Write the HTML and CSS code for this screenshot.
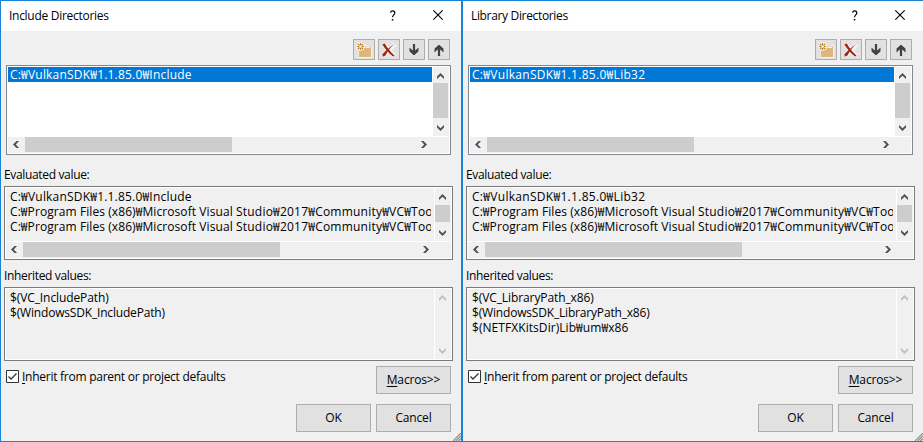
FILE: index.html
```
<!DOCTYPE html>
<html lang="en">
<head>
<meta charset="utf-8">
<title>Directories</title>
<link rel="stylesheet" href="styles.css">
</head>
<body>
<svg class="defs" width="0" height="0">
  <defs>
    <symbol id="chev-up" viewBox="0 0 7 6"><path d="M0 3.5 3.5 0 7 3.5V6L3.5 2.8 0 6z"/></symbol>
    <symbol id="chev-down" viewBox="0 0 7 6"><path d="M0 2.5 3.5 6 7 2.5V0L3.5 3.2 0 0z"/></symbol>
    <symbol id="chev-left" viewBox="0 0 6 7"><path d="M3.5 0 0 3.5 3.5 7H6L2.8 3.5 6 0z"/></symbol>
    <symbol id="chev-right" viewBox="0 0 6 7"><path d="M2.5 0 6 3.5 2.5 7H0L3.2 3.5 0 0z"/></symbol>
    <symbol id="help" viewBox="0 0 8 11"><path d="M1.5 2.6C1.8 1.3 2.700 .8 3.700 .8 5 .8 5.800 1.600 5.800 2.900 5.800 4.800 3.500 4.900 3.500 7.200" fill="none" stroke="#000" stroke-width="1.200"/><path d="M2.800 9h1.500v1.500H2.800z"/></symbol>
    <symbol id="close" viewBox="0 0 10 10"><path d="M.3.3 9.700 9.700M9.700.3.3 9.700" fill="none" stroke="#000" stroke-width="1.100"/></symbol>
    <symbol id="new" viewBox="0 0 16 16">
      <path d="M2.500 5H9l1-1.500h6V16H2.500z" fill="#f3f3f3"/>
      <path d="M3 6h6l1-1.500h5V15H3z" fill="#dcb67a"/><path d="M10 5.500H14" stroke="#f3f3f3"/>
      <circle cx="4.500" cy="4.500" r="4.300" fill="#f3f3f3"/>
      <path d="M4.500 1v2.200M4.500 5.800V8M1 4.500h2.200M5.800 4.500H8M2 2l1.500 1.500M5.500 5.500 7 7M7 2 5.500 3.500M3.500 5.500 2 7" stroke="#c27d1a" stroke-width="1.100"/>
    </symbol>
    <symbol id="delete" viewBox="0 0 16 16">
      <path d="M2.500 2.500 13 14M14 2 3 13.500" stroke="#f3f3f3" stroke-width="4.500"/>
      <path d="M1.300 2.500 3.800 1.500C6 5.500 10 10.500 13.500 13.500L12 14.500C8 11.500 4 7 1.300 2.500z" fill="#a1260d"/>
      <path d="M14 1.500C10 4.500 6.500 9 4.500 13.500L2 14.500 1.300 12.500C5 8.500 9 4.500 14 1.500z" fill="#a1260d"/>
    </symbol>
    <symbol id="down" viewBox="0 0 16 16">
      <path d="M8 2v9M3.700 7.500 8 11.800l4.300-4.300" fill="none" stroke="#f3f3f3" stroke-width="4"/>
      <path d="M6.800 2h2.400v6.500l3.300-3v4L8 13.500 3.500 9.500v-4l3.300 3z" fill="#424242"/>
    </symbol>
    <symbol id="up" viewBox="0 0 16 16">
      <path d="M8 14V5M3.700 8.500 8 4.200l4.300 4.300" fill="none" stroke="#f3f3f3" stroke-width="4"/>
      <path d="M6.800 14h2.400V7.500l3.300 3v-4L8 2.500 3.500 6.500v4l3.300-3z" fill="#424242"/>
    </symbol>
    <symbol id="grip" viewBox="0 0 9 9"><path d="M0 9 9 0M3 9 9 3M6 9 9 6" fill="none" stroke="#8a8a8a" stroke-width="1.300"/></symbol>
  </defs>
</svg>

<div class="desktop">
  <section class="dialog">
    <header class="titlebar"><span class="caption">Include Directories</span><svg class="help"><use href="#help"/></svg><svg class="close"><use href="#close"/></svg></header>
    <div class="toolbar">
      <span class="tool"><svg><use href="#new"/></svg></span><span class="tool"><svg><use href="#delete"/></svg></span><span class="tool"><svg><use href="#down"/></svg></span><span class="tool"><svg><use href="#up"/></svg></span>
    </div>
    <div class="box edit">
      <div class="lines"><div class="line selected path">C:₩VulkanSDK₩1.1.85.0₩Include</div></div>
      <div class="vbar"><svg class="v"><use href="#chev-up"/></svg><i class="thumb"></i><svg class="v"><use href="#chev-down"/></svg></div>
      <div class="hbar"><svg class="h"><use href="#chev-left"/></svg><i class="thumb"></i><svg class="h"><use href="#chev-right"/></svg></div>
    </div>
    <div class="label evaluated">Evaluated value:</div>
    <div class="box values">
      <div class="lines"><div class="line path">C:₩VulkanSDK₩1.1.85.0₩Include</div><div class="line long">C:₩Program Files (x86)₩Microsoft Visual <span class="tail">Studio₩2017₩Community₩VC₩Tools</span></div><div class="line long">C:₩Program Files (x86)₩Microsoft Visual <span class="tail">Studio₩2017₩Community₩VC₩Tools</span></div></div>
      <div class="vbar"><svg class="v"><use href="#chev-up"/></svg><i class="thumb"></i><svg class="v"><use href="#chev-down"/></svg></div>
      <div class="hbar"><svg class="h"><use href="#chev-left"/></svg><i class="thumb"></i><svg class="h"><use href="#chev-right"/></svg></div>
    </div>
    <div class="label inherited">Inherited values:</div>
    <div class="box macros">
      <div class="lines"><div class="line macro">$(VC_IncludePath)</div><div class="line macro sdk">$(WindowsSDK_IncludePath)</div></div>
      <div class="vbar off"><svg class="v"><use href="#chev-up"/></svg><svg class="v"><use href="#chev-down"/></svg></div>
    </div>
    <div class="options">
      <label class="check"><svg class="tick" viewBox="0 0 13 13"><path d="M.5.5h12v12H.5z" fill="#fff" stroke="#333"/><path d="M2.500 6.500 5 9l5.500-5.500" fill="none" stroke="#333" stroke-width="1.300"/></svg><span><u>I</u>nherit from parent or project defaults</span></label>
      <div class="button"><span><u>M</u>acros&gt;&gt;</span></div>
    </div>
    <div class="actions"><div class="button">OK</div><div class="button">Cancel</div></div>
    <svg class="grip"><use href="#grip"/></svg>
  </section>

  <section class="dialog">
    <header class="titlebar"><span class="caption library">Library Directories</span><svg class="help"><use href="#help"/></svg><svg class="close"><use href="#close"/></svg></header>
    <div class="toolbar">
      <span class="tool"><svg><use href="#new"/></svg></span><span class="tool"><svg><use href="#delete"/></svg></span><span class="tool"><svg><use href="#down"/></svg></span><span class="tool"><svg><use href="#up"/></svg></span>
    </div>
    <div class="box edit">
      <div class="lines"><div class="line selected path lib">C:₩VulkanSDK₩1.1.85.0₩Lib32</div></div>
      <div class="vbar"><svg class="v"><use href="#chev-up"/></svg><i class="thumb"></i><svg class="v"><use href="#chev-down"/></svg></div>
      <div class="hbar"><svg class="h"><use href="#chev-left"/></svg><i class="thumb"></i><svg class="h"><use href="#chev-right"/></svg></div>
    </div>
    <div class="label evaluated">Evaluated value:</div>
    <div class="box values">
      <div class="lines"><div class="line path lib">C:₩VulkanSDK₩1.1.85.0₩Lib32</div><div class="line long">C:₩Program Files (x86)₩Microsoft Visual <span class="tail">Studio₩2017₩Community₩VC₩Tools</span></div><div class="line long">C:₩Program Files (x86)₩Microsoft Visual <span class="tail">Studio₩2017₩Community₩VC₩Tools</span></div></div>
      <div class="vbar"><svg class="v"><use href="#chev-up"/></svg><i class="thumb"></i><svg class="v"><use href="#chev-down"/></svg></div>
      <div class="hbar"><svg class="h"><use href="#chev-left"/></svg><i class="thumb"></i><svg class="h"><use href="#chev-right"/></svg></div>
    </div>
    <div class="label inherited">Inherited values:</div>
    <div class="box macros">
      <div class="lines"><div class="line macro">$(VC_LibraryPath_x86)</div><div class="line macro sdk">$(WindowsSDK_LibraryPath_x86)</div><div class="line kits">$(NETFXKitsDir)Lib₩um₩x86</div></div>
      <div class="vbar off"><svg class="v"><use href="#chev-up"/></svg><svg class="v"><use href="#chev-down"/></svg></div>
    </div>
    <div class="options">
      <label class="check"><svg class="tick" viewBox="0 0 13 13"><path d="M.5.5h12v12H.5z" fill="#fff" stroke="#333"/><path d="M2.500 6.500 5 9l5.500-5.500" fill="none" stroke="#333" stroke-width="1.300"/></svg><span><u>I</u>nherit from parent or project defaults</span></label>
      <div class="button"><span><u>M</u>acros&gt;&gt;</span></div>
    </div>
    <div class="actions"><div class="button">OK</div><div class="button">Cancel</div></div>
    <svg class="grip"><use href="#grip"/></svg>
  </section>
</div>
</body>
</html>
```
FILE: styles.css
```
* { box-sizing: border-box; }
body {
  margin: 0;
  overflow: hidden;
  font: 12px/15px "Open Sans", "Noto Sans CJK KR", sans-serif;
  color: #000;
}
svg { display: block; flex: none; }
.defs { position: absolute; }
.desktop { display: flex; width: 924px; height: 442px; }
.dialog {
  position: relative;
  display: flex;
  flex-direction: column;
  width: 462px;
  height: 442px;
  border: 1px solid #1883d7;
  background: #f0f0f0;
}
.titlebar {
  display: flex;
  height: 30px;
  padding: 7px 18px 0 8px;
  background: #fff;
}
.caption { flex: 1; letter-spacing: -0.28px; }
.library { letter-spacing: -0.34px; }
.help { width: 8px; height: 11px; margin: 2px 36px 0 0; }
.close { width: 10px; height: 10px; margin-top: 2px; }

.toolbar {
  display: flex;
  justify-content: flex-end;
  gap: 3px;
  padding: 8px 11px 5px 0;
}
.tool {
  width: 22px;
  height: 21px;
  padding: 2px;
  border: 1px solid #adadad;
  background: #e1e1e1;
}
.tool svg { width: 16px; height: 16px; }

.box {
  display: grid;
  grid-template-columns: 1fr 16px;
  grid-template-rows: 1fr 16px;
  gap: 1px;
  border: 1px solid #7a7a7a;
  padding: 1px;
  background: #fff;
}
.edit { height: 90px; margin: 0 10px 0 5px; border-color: #828790; }
.values { height: 74px; margin: 0 8px 0 3px; }
.macros { height: 74px; margin: 0 8px 0 3px; grid-template-rows: 1fr; }
.lines { min-width: 0; overflow: hidden; background: #f0f0f0; }
.edit .lines { background: #fff; }
.values .lines, .macros .lines { padding: 1px 3px 0 4px; }
.line { height: 15px; white-space: nowrap; overflow: hidden; }
.selected { padding-left: 2px; background: #0078d7; color: #fff; }
.path { letter-spacing: 0.2px; }
.lib { letter-spacing: 0.3px; }
.long { letter-spacing: 0.08px; }
.tail { letter-spacing: 0.22px; }
.macro { letter-spacing: -0.1px; }
.sdk { letter-spacing: -0.18px; }
.kits { letter-spacing: 0.06px; }

.vbar, .hbar { display: flex; background: #f0f0f0; fill: #505050; }
.vbar { flex-direction: column; justify-content: space-between; }
.hbar { grid-column: 1 / 3; }
.v { width: 7px; height: 6px; margin: 6px 0 5px 4px; }
.h { width: 6px; height: 7px; margin: 4px 6px 0 5px; }
.hbar .h:last-child { margin: 4px 22px 0 auto; }
.vbar .v:last-child { margin-top: 0; }
.thumb { background: #cdcdcd; }
.vbar .thumb { width: 15px; }
.hbar .thumb { height: 15px; }
.edit .vbar .thumb { height: 35px; margin: -1px 0 auto; }
.edit .hbar .thumb { width: 207px; }
.values .vbar .thumb { height: 17px; margin-bottom: auto; }
.values .hbar .thumb { width: 257px; }
.off { fill: #bfbfbf; }

.label { height: 15px; padding-left: 3px; letter-spacing: -0.34px; }
.evaluated { margin: 12px 0 4px; }
.inherited { margin: 8px 0 4px; }

.options {
  display: flex;
  justify-content: space-between;
  align-items: flex-start;
  padding: 5px 10px 0 5px;
}
.check { display: flex; gap: 3px; padding-top: 3px; letter-spacing: -0.26px; }
.tick { width: 13px; height: 13px; margin-top: 1px; }
u { text-underline-offset: 2px; }
.button {
  width: 75px;
  height: 28px;
  padding-top: 5px;
  border: 1px solid #adadad;
  background: #e1e1e1;
  text-align: center;
  letter-spacing: -0.15px;
}
.actions { display: flex; justify-content: flex-end; gap: 5px; padding: 10px 10px 0 0; }
.grip { position: absolute; right: 0; bottom: 0; width: 8px; height: 8px; }
```
